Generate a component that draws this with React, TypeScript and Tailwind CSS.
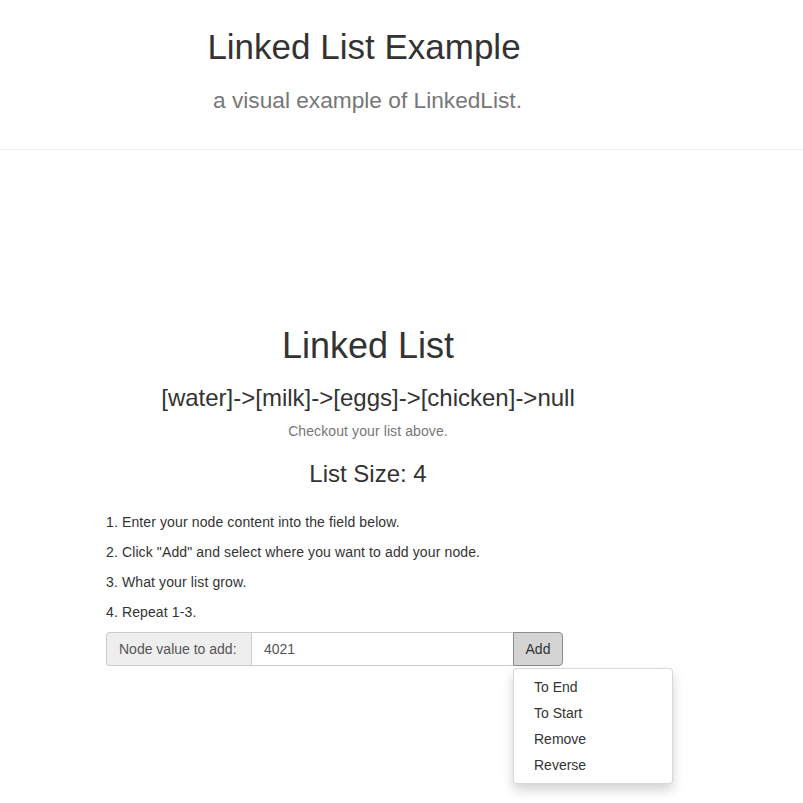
import React from 'react'

const steps = [
  '1. Enter your node content into the field below.',
  '2. Click "Add" and select where you want to add your node.',
  '3. What your list grow.',
  '4. Repeat 1-3.',
]

const actions = ['To End', 'To Start', 'Remove', 'Reverse']

export default function App() {
  return (
    <div className="min-h-screen bg-white text-[#333] text-sm font-['Liberation_Sans',Arial,sans-serif]">
      {/* Header */}
      <header className="border-b border-[#eee] pb-[34px]">
        <div className="ml-[102px] w-[524px] text-center">
          <h1 className="pt-[27px] text-[35px] leading-[40px] font-normal">Linked List Example</h1>
          <p className="mt-[18px] pl-[7px] text-[22.7px] leading-[30px] text-[#777]">a visual example of LinkedList.</p>
        </div>
      </header>

      {/* Main */}
      <main className="ml-[106px] w-[524px]">
        <div className="text-center">
          <h1 className="mt-[176px] text-[36px] leading-[40px] font-normal">Linked List</h1>
          <h3 className="mt-[19px] text-[24px] leading-[26px]">[water]-&gt;[milk]-&gt;[eggs]-&gt;[chicken]-&gt;null</h3>
          <p className="mt-[10px] leading-5 text-[#777] tracking-[0.1px]">Checkout your list above.</p>
          <h3 className="mt-[20px] text-[24px] leading-[26px]">List Size: 4</h3>
        </div>

        <div className="mt-[25px] flex flex-col gap-[10px]">
          {steps.map((s) => (
            <p key={s} className="leading-5 tracking-[0.12px]">{s}</p>
          ))}
        </div>

        <div className="mt-[10px] flex h-[34px] w-[457px]">
          <span className="flex w-[145px] items-center rounded-l-[4px] border border-r-0 border-[#ccc] bg-[#eee] px-3 text-[#555]">
            Node value to add:
          </span>
          <input
            readOnly
            value="4021"
            className="w-[262px] border border-r-0 border-[#ccc] px-3 text-[#555] outline-none"
          />
          <div className="relative">
            <button className="h-[34px] w-[50px] rounded-r-[4px] border border-[#8c8c8c] bg-[#d4d4d4] text-[#333]">
              Add
            </button>
            <ul className="absolute left-0 top-[36px] w-[160px] rounded-[4px] border border-black/15 bg-white py-[5px] shadow-[0_6px_12px_rgba(0,0,0,0.175)]">
              {actions.map((a) => (
                <li key={a} className="px-5 py-[3px] leading-5 text-[#333]">{a}</li>
              ))}
            </ul>
          </div>
        </div>
      </main>
    </div>
  )
}
